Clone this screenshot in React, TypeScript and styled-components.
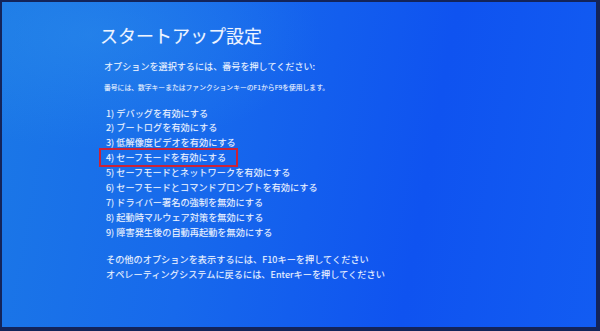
import React from "react";
import styled, { createGlobalStyle } from "styled-components";

const Global = createGlobalStyle`
  html, body { margin: 0; padding: 0; background: #0d1a3f; }
  #root { width: 600px; height: 331px; }
`;

const Screen = styled.div`
  box-sizing: border-box;
  width: 600px;
  height: 331px;
  border-style: solid;
  border-color: #13245a;
  border-width: 2px 4px 4px 2px;
  background:
    radial-gradient(ellipse 55% 50% at 15% 10%, rgba(50, 150, 235, 0.4), rgba(50, 150, 235, 0) 70%),
    linear-gradient(100deg, #1b78e6 0%, #1769ec 35%, #0f53f0 70%, #125cf2 100%);
  display: flex;
  flex-direction: column;
  padding: 22px 0 0 98px;
  font-family: "Noto Sans CJK JP", "Noto Sans", sans-serif;
  color: #eef4ff;
  text-shadow: 0 0 1px rgba(230, 240, 255, 0.35);
  overflow: hidden;
`;

const Title = styled.h1`
  margin: 0;
  font-size: 18px;
  line-height: 22px;
  font-weight: 400;
`;

const Prompt = styled.p`
  margin: 14px 0 0 4px;
  font-size: 9.1px;
  line-height: 12px;
`;

const Hint = styled.p`
  margin: 10px 0 0 4px;
  font-size: 6.8px;
  line-height: 10px;
`;

const OptionList = styled.ol`
  list-style: none;
  margin: 13.5px 0 0 6px;
  padding: 0;
  display: flex;
  flex-direction: column;
  align-items: flex-start;
`;

const Option = styled.li<{ $highlighted?: boolean }>`
  position: relative;
  font-size: 9.2px;
  line-height: 14.9px;
  white-space: nowrap;
  &::after {
    content: "";
    display: ${(p) => (p.$highlighted ? "block" : "none")};
    position: absolute;
    top: -2px;
    bottom: -2px;
    left: -7px;
    right: -12px;
    border: 2px solid #cc2236;
    pointer-events: none;
  }
`;

const Footer = styled.div`
  margin: 12px 0 0 6px;
  display: flex;
  flex-direction: column;
`;

const FooterLine = styled.p`
  margin: 0;
  font-size: 9.2px;
  line-height: 15px;
  white-space: nowrap;
`;

const options = [
  "デバッグを有効にする",
  "ブートログを有効にする",
  "低解像度ビデオを有効にする",
  "セーフモードを有効にする",
  "セーフモードとネットワークを有効にする",
  "セーフモードとコマンドプロンプトを有効にする",
  "ドライバー署名の強制を無効にする",
  "起動時マルウェア対策を無効にする",
  "障害発生後の自動再起動を無効にする",
];

export default function App() {
  return (
    <>
      <Global />
      <Screen>
        <Title>スタートアップ設定</Title>
        <Prompt>オプションを選択するには、番号を押してください:</Prompt>
        <Hint>番号には、数字キーまたはファンクションキーのF1からF9を使用します。</Hint>
        <OptionList>
          {options.map((text, i) => (
            <Option key={i} $highlighted={i === 3}>
              {i + 1}) {text}
            </Option>
          ))}
        </OptionList>
        <Footer>
          <FooterLine>その他のオプションを表示するには、F10キーを押してください</FooterLine>
          <FooterLine>オペレーティングシステムに戻るには、Enterキーを押してください</FooterLine>
        </Footer>
      </Screen>
    </>
  );
}
